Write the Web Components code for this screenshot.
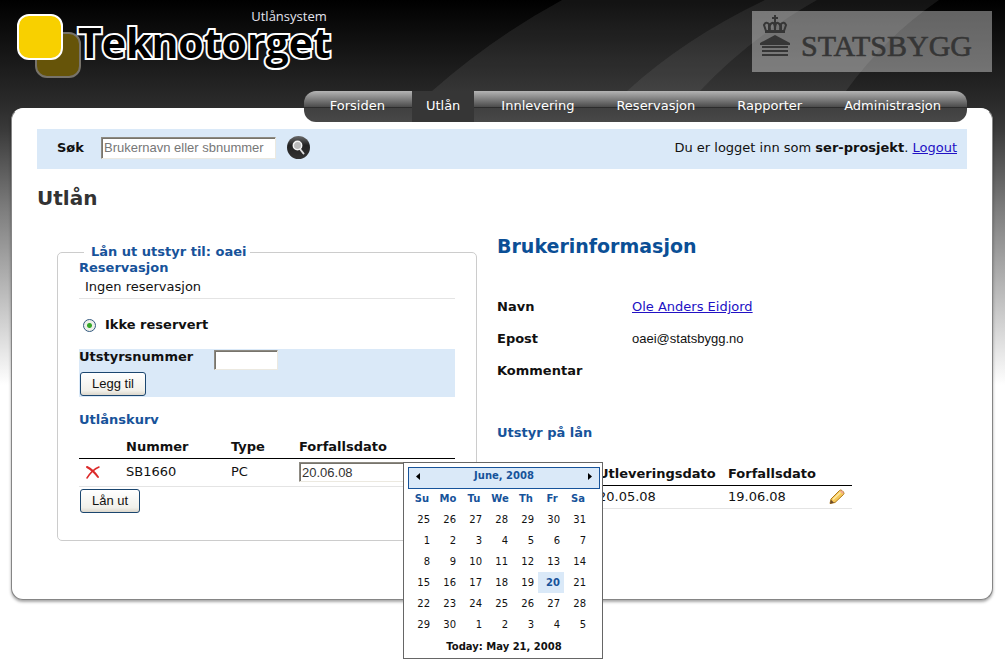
<!DOCTYPE html>
<html lang="no">
<head>
<meta charset="utf-8">
<title>Teknotorget – Utlån</title>
<style>
  html { background: #fff; }
  body {
    margin: 0;
    font: 13px/16px Verdana, "DejaVu Sans", sans-serif;
    color: #111;
    background: linear-gradient(#000 0, #2b2b2b 104px, #3a3a3a 130px, #7c7c7c 208px, #fff 385px) no-repeat;
    min-height: 100vh;
    --blue: #17539a;
    --tint: #dae9f8;
    --rule: #e4e4e4;
  }
</style>
</head>
<body>
<tk-app></tk-app>
<script>
const define = (name, css, html, ready) => {
  const template = document.createElement('template');
  template.innerHTML = `<style>*{box-sizing:border-box}${css}</style>${html}`;
  customElements.define(name, class extends HTMLElement {
    constructor() {
      super();
      this.attachShadow({ mode: 'open' }).append(template.content.cloneNode(true));
      if (ready) ready(this.shadowRoot, this);
    }
  });
};

const inputCss = `
  input[type=text] {
    font: 13px/16px Arial, "Liberation Sans", sans-serif; color: #333;
    border: 1px solid; border-color: #8d8a82 #ece9e0 #ece9e0 #8d8a82;
    box-shadow: inset 1px 1px #77746c; background: #fff;
    border-radius: 0; padding: 1px 2px; margin: 0; outline: 0;
  }`;

/* Brand: two overlapping tiles, tagline and outlined wordmark */
define('tk-brand', `
  :host { display: flex; color: #fff; }
  svg { flex: none; width: 65px; height: 65px; margin-top: 14px; }
  .words { margin: 8px 0 0 -4px; }
  .tag { margin: 0; text-align: right; padding-right: 4px; font: 13px/16px "Open Sans", sans-serif; color: #e4e4ee; }
  .name { margin: 0; font: 700 41px/36px "Open Sans", sans-serif; color: #000;
    -webkit-text-stroke: 4px #fff; paint-order: stroke fill; }`,
  `<svg viewBox="0 0 65 65" aria-hidden="true">
    <rect x="19" y="19" width="44" height="44" rx="11" fill="#665409" stroke="#77736b" stroke-width="2"/>
    <rect x="1" y="1" width="44" height="44" rx="11" fill="#f8d000" stroke="#fff" stroke-width="2"/>
  </svg>
  <div class="words"><p class="tag">Utlånsystem</p><p class="name">Teknotorget</p></div>`);

/* Owner logo: crown above a pillared house */
define('tk-owner', `
  :host { display: flex; width: 240px; height: 61px; background: rgba(255,255,255,.38); color: #363636; }
  svg { width: 30px; height: 44px; margin: 4px 0 0 8px; flex: none; }
  span { font: 30px/36px "Liberation Serif", serif; margin: 17px 0 0 11px; -webkit-text-stroke: 0.6px #363636; }`,
  `<svg viewBox="0 0 30 44" fill="#363636" aria-hidden="true">
    <path d="M14 0h2v2h2v2h-2v3h-2V4h-2V2h2z"/>
    <path d="M5 15h20v3H5z"/>
    <g fill="none" stroke="#363636" stroke-width="2"><path d="M6 16L4 10q2-4 5-1l1 6q-1-6 2-7t3 7q0-8 3-7t2 7l1-6q3-3 5 1l-2 6M15 6v10M9 9v7M21 9v7"/></g>
    <path d="M15 20L0 28v2h30v-2zM2 31h26v2H2zM2 35h26v2H2zM2 39h26v2H2z"/>
  </svg><span>STATSBYGG</span>`);

define('tk-header', `
  :host { display: block; position: relative; }
  .sweep { position: absolute; left: 0; top: 0; width: 100%; height: 108px; }
  .row { position: relative; display: flex; justify-content: space-between; align-items: flex-start; height: 91px; padding: 0 13px 0 17px; }
  tk-owner { margin-top: 11px; }`,
  `<svg class="sweep" viewBox="0 0 1005 108" preserveAspectRatio="none" aria-hidden="true">
    <path fill="#fff" fill-opacity=".075" d="M562 0Q492 38 432 91L416 108H828L846 91Q884 38 939 0z"/>
    <path fill="#fff" fill-opacity=".065" d="M765 0Q685 38 627 91L610 108H684L700 91Q750 38 817 0z"/>
  </svg>
  <div class="row"><tk-brand></tk-brand><tk-owner></tk-owner></div>`);

define('tk-nav', `
  :host { display: flex; justify-content: flex-end; position: relative; z-index: 1; padding-right: 38px; margin-bottom: -14px; }
  ul { display: flex; list-style: none; margin: 0; padding: 0 5px; height: 31px; border-radius: 12px; overflow: hidden;
    background: linear-gradient(#b4b4b4 0, #4b4b4b 16px, #2c2c2c 16px, #2c2c2c 17px, #404040 17px, #484848 100%); }
  a { display: block; padding: 0 21px; line-height: 29px; color: #fff; text-decoration: none; height: 31px; }
  a[aria-current] { margin: 0 6px; padding: 0 14px; background: #363636; }`,
  `<ul>
    <li><a href="#">Forsiden</a></li><li><a href="#" aria-current="page">Utlån</a></li>
    <li><a href="#">Innlevering</a></li><li><a href="#">Reservasjon</a></li>
    <li><a href="#">Rapporter</a></li><li><a href="#">Administrasjon</a></li>
  </ul>`);

define('tk-search', `
  ${inputCss}
  :host { display: flex; align-items: center; height: 40px; padding: 0 10px 3px 20px; background: var(--tint); }
  label { font-weight: 700; width: 44px; }
  input[type=text] { width: 175px; height: 22px; }
  input::placeholder { color: #777; opacity: 1; }
  button { border: 0; padding: 0; margin: 0 0 0 11px; background: none; width: 23px; height: 23px; }
  svg { display: block; }
  p { margin: 0 0 0 auto; }
  a { color: #2211c4; }`,
  `<label for="q">Søk</label><input id="q" type="text" placeholder="Brukernavn eller sbnummer">
  <button type="button" aria-label="Søk"><svg width="23" height="23" viewBox="0 0 23 23">
    <defs><linearGradient id="g" x1="0" y1="0" x2="0" y2="1"><stop offset="0" stop-color="#6a6a6a"/><stop offset=".4" stop-color="#222"/><stop offset="1" stop-color="#333"/></linearGradient></defs>
    <circle cx="11.5" cy="11.5" r="11.5" fill="url(#g)"/>
    <path d="M13 13l3.500 4.500" stroke="#ddd" stroke-width="2" stroke-linecap="round"/>
    <circle cx="10.5" cy="9.5" r="4.200" fill="#bbb" stroke="#f4f4f4" stroke-width="1.500"/></svg></button>
  <p>Du er logget inn som <b>ser-prosjekt</b>. <a href="#">Logout</a></p>`);

define('tk-calendar', `
  :host { display: block; width: 200px; height: 197px; padding: 4px 2px 0 4px; border: 1px solid #666; background: #fff; font-size: 10px; line-height: 14px; }
  .head { display: flex; justify-content: space-between; height: 22px; padding: 1px 6px; border: 1px solid var(--blue); background: var(--tint); }
  .head b { color: var(--blue); font-size: 10px; }
  .head button { border: 0; padding: 0; background: none; width: 6px; height: 14px; }
  svg { display: block; }
  table { border-collapse: collapse; table-layout: fixed; width: 182px; text-align: right; margin-top: -1px; }
  th, td { padding: 0 4px 0 0; height: 21px; font-size: 10px; }
  th { color: var(--blue); text-align: center; padding: 0 0 0 2px; }
  .on { background: var(--tint); color: var(--blue); font-weight: 700; }
  p { margin: 5px 0 0; text-align: center; font-weight: 700; font-size: 10px; }`,
  `<div class="head"><button type="button" aria-label="Forrige"><svg width="6" height="14"><path d="M5 4v7L1 7.500z"/></svg></button>
    <b>June, 2008</b><button type="button" aria-label="Neste"><svg width="6" height="14"><path d="M1 4v7l4-3.500z"/></svg></button></div>
  <table><thead><tr></tr></thead><tbody></tbody></table><p>Today: May 21, 2008</p>`,
  root => {
    root.querySelector('thead tr').innerHTML = ['Su','Mo','Tu','We','Th','Fr','Sa'].map(d => `<th>${d}</th>`).join('');
    const start = Date.UTC(2008, 4, 25);
    let rows = '';
    for (let w = 0; w < 6; w++) {
      rows += '<tr>';
      for (let d = 0; d < 7; d++) {
        const day = new Date(start + (w * 7 + d) * 864e5);
        const on = day.getUTCMonth() === 5 && day.getUTCDate() === 20;
        rows += `<td${on ? ' class="on"' : ''}>${day.getUTCDate()}</td>`;
      }
      rows += '</tr>';
    }
    root.querySelector('tbody').innerHTML = rows;
  });

define('tk-button', `
  :host { display: block; }
  button { display: block; height: 24px; padding: 0 11px; border: 1px solid #1b466f; border-radius: 3px;
    background: linear-gradient(#fff, #f1f0ea 80%, #dcd7cc); font: 13px/20px Arial, "Liberation Sans", sans-serif; color: #111; }`,
  `<button type="button"><slot></slot></button>`);

define('tk-loan-form', `
  ${inputCss}
  :host { display: block; }
  fieldset { margin: 0; border: 1px solid #ccc; border-radius: 5px; padding: 0 21px 27px; min-width: 0; }
  legend { padding: 0 3px 0 7px; margin-left: 5px; }
  legend, h3 { color: var(--blue); font-weight: 700; font-size: 13px; line-height: 16px; }
  h3 { margin: 0; }
  .none { margin: 0; padding: 3px 6px; border-bottom: 1px solid var(--rule); }
  .choice { display: flex; align-items: center; gap: 9px; margin: 18px 0 16px; padding-left: 4px; font-weight: 700; }
  input[type=radio] { appearance: none; width: 13px; height: 13px; margin: 0; border: 1px solid #33597f; border-radius: 50%;
    background: radial-gradient(circle, #35a828 0 2px, #edf0ea 3px); }
  .add { background: var(--tint); height: 48px; }
  .add > div { display: flex; }
  .add label { width: 135px; font-weight: 700; }
  .add input { width: 64px; height: 20px; margin-top: 1px; }
  .add tk-button, .lend { padding-left: 1px; margin-top: 2px; }
  .cart { margin-top: 15px; }
  table { width: 100%; table-layout: fixed; border-collapse: collapse; text-align: left; margin-top: 8px; }
  th, td { padding: 0; }
  th { height: 22px; border-bottom: 1px solid #000; }
  td { height: 28px; border-bottom: 1px solid var(--rule); }
  td svg { display: block; margin-left: 6px; }
  td button { border: 0; background: none; padding: 0; display: block; }
  .x { width: 47px; } .n { width: 105px; } .t { width: 68px; }
  .date { position: relative; width: 120px; }
  .date input { display: block; width: 120px; height: 20px; }
  .date tk-calendar { position: absolute; left: 104px; top: 0; z-index: 2; }`,
  `<fieldset><legend>Lån ut utstyr til: oaei</legend>
    <h3>Reservasjon</h3><p class="none">Ingen reservasjon</p>
    <label class="choice"><input type="radio" checked>Ikke reservert</label>
    <div class="add"><div><label for="nr">Utstyrsnummer</label><input id="nr" type="text"></div><tk-button>Legg til</tk-button></div>
    <h3 class="cart">Utlånskurv</h3>
    <table><thead><tr><th class="x"></th><th class="n">Nummer</th><th class="t">Type</th><th>Forfallsdato</th></tr></thead>
    <tbody><tr><td><button type="button" aria-label="Fjern"><svg width="16" height="16" fill="none" stroke="#dc2a2a" stroke-linecap="round"><path stroke-width="2" d="M2 3q6 3 11 10"/><path stroke-width="1.500" d="M14 3Q7 6 2 14"/></svg></button></td><td>SB1660</td><td>PC</td>
      <td><div class="date"><input type="text" value="20.06.08" aria-label="Forfallsdato"><tk-calendar></tk-calendar></div></td></tr></tbody></table>
    <tk-button class="lend">Lån ut</tk-button>
  </fieldset>`);

define('tk-user-info', `
  :host { display: block; }
  h2 { margin: 0; font-size: 19px; line-height: 24px; color: #0b4f96; }
  h3 { margin: 0; font-size: 13px; line-height: 16px; color: var(--blue); }
  dl { display: grid; grid-template-columns: 135px 1fr; row-gap: 16px; margin: 41px 0 46px; }
  dt { font-weight: 700; } dd { margin: 0; }
  .mail { font: 13px/16px Arial, "Liberation Sans", sans-serif; }
  a { color: #2211c4; }
  table { width: 355px; table-layout: fixed; border-collapse: collapse; text-align: left; margin-top: 22px; }
  th, td { padding: 0; }
  th { height: 22px; border-bottom: 1px solid #000; }
  td { height: 23px; border-bottom: 1px solid var(--rule); }
  button { border: 0; background: none; padding: 0; display: block; }
  svg { display: block; }
  .a { width: 101px; } .b { width: 130px; } .c { width: 101px; }`,
  `<h2>Brukerinformasjon</h2>
  <dl><dt>Navn</dt><dd><a href="#">Ole Anders Eidjord</a></dd><dt>Epost</dt><dd class="mail">oaei@statsbygg.no</dd><dt>Kommentar</dt><dd></dd></dl>
  <h3>Utstyr på lån</h3>
  <table><thead><tr><th class="a"></th><th class="b">Utleveringsdato</th><th class="c">Forfallsdato</th><th></th></tr></thead>
  <tbody><tr><td></td><td>20.05.08</td><td>19.06.08</td><td><button type="button" aria-label="Rediger"><svg width="16" height="16" viewBox="0 0 16 16">
    <path d="M1 14.500l1-4.500L10.500 1.500q1-1 2.500 0l1.500 1.500q1 1.500 0 2.500L6 13.500z" fill="#f6c95b" stroke="#b07a1c"/>
    <path d="M4 10.500L11.500 3.500" stroke="#fdeaa8" stroke-width="1.500"/><path d="M1 14.800l1-4 3 3z" fill="#6b4a2a"/><path d="M11 2l1.500-.5 2 2-.5 1.500z" fill="#f3a0a0"/></svg></button></td></tr></tbody></table>`);

define('tk-card', `
  :host { display: block; margin: 0 12px 0 11px; padding: 20px 25px 58px; background: #fff; border: 1px solid #858585; border-top-color: #fff; border-radius: 12px; box-shadow: 0 2px 3px rgba(0,0,0,.35); }`,
  `<slot></slot>`);

define('tk-app', `
  :host { display: block; }
  h1 { margin: 17px 0 0; font-size: 20px; line-height: 24px; color: #333; }
  .cols { display: grid; grid-template-columns: 42fr 47fr; gap: 20px; padding-left: 20px; margin-top: 34px; align-items: start; }
  tk-user-info { margin-top: -10px; }`,
  `<tk-header></tk-header><tk-nav></tk-nav>
  <tk-card><tk-search></tk-search><h1>Utlån</h1>
    <div class="cols"><tk-loan-form></tk-loan-form><tk-user-info></tk-user-info></div></tk-card>`);
</script>
</body>
</html>
